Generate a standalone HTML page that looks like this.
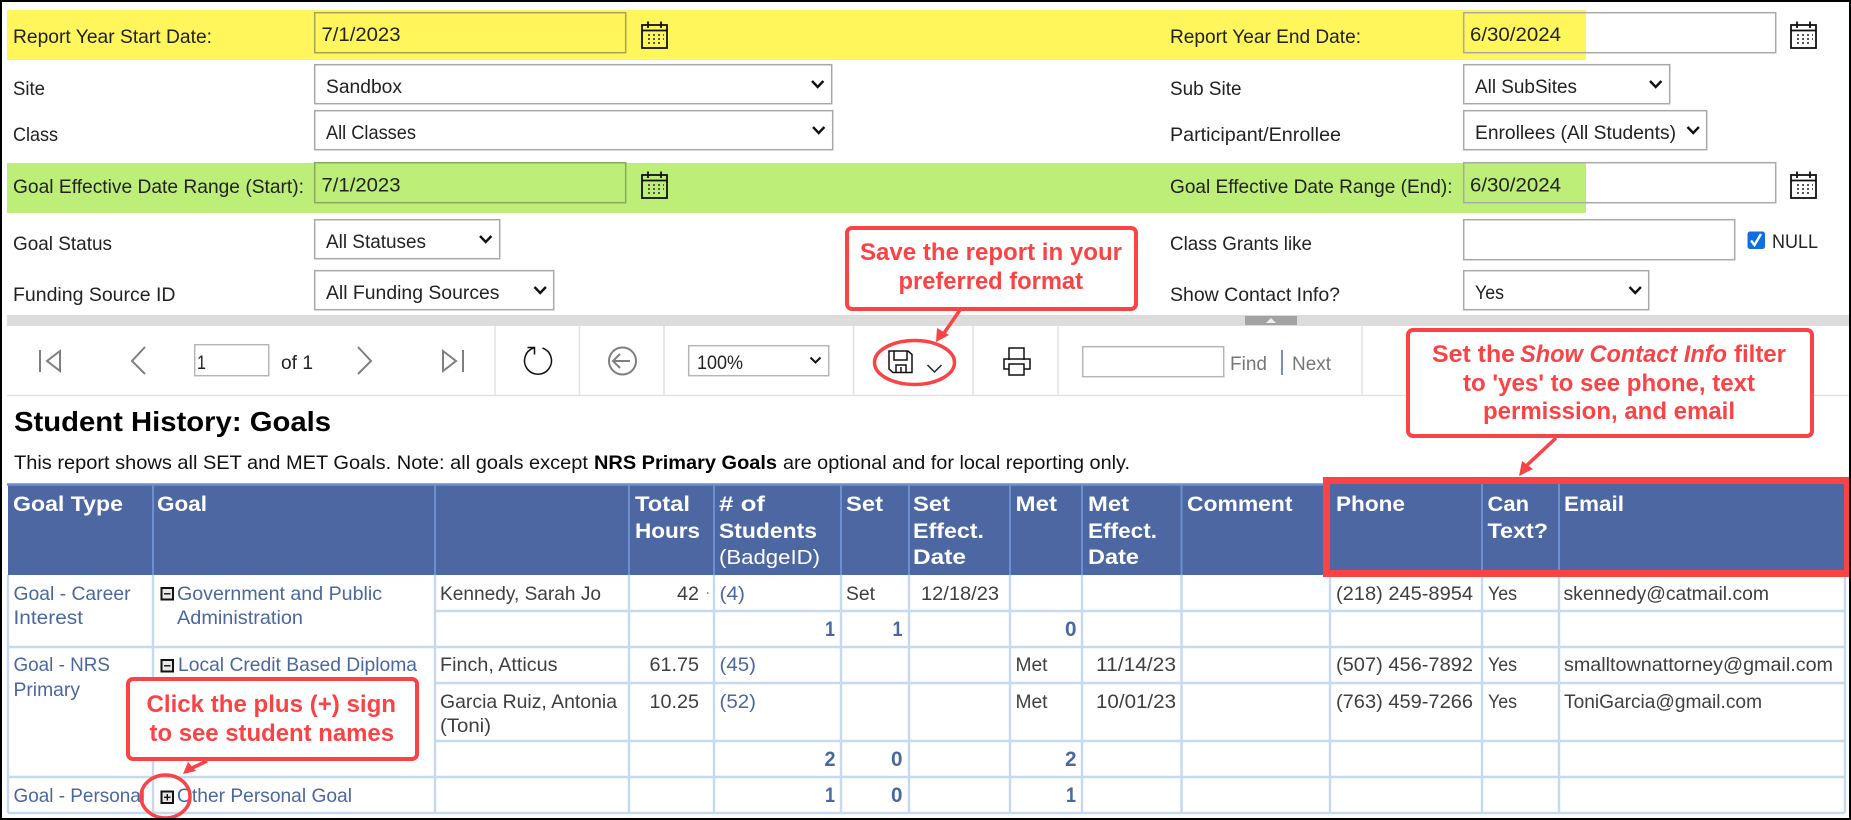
<!DOCTYPE html>
<html lang="en">
<head>
<meta charset="utf-8">
<title>Student History: Goals</title>
<style>
html,body{margin:0;padding:0;background:#fff;width:1851px;height:820px;overflow:hidden}
svg{display:block}
text{font-family:"Liberation Sans",Arial,sans-serif;white-space:pre}
.l{font-size:19.5px;fill:#222}
.i{font-size:19.5px;fill:#222}
.t{font-size:19.5px;fill:#3f3f3f}
.a{font-size:19.5px;fill:#4a679f}
.h{font-size:21.5px;font-weight:bold;fill:#fff}
.hn{font-size:20.5px;fill:#fff}
.n{font-size:21px;font-weight:bold;fill:#4a679f}
.c{font-size:24px;font-weight:bold;fill:#fb4245}
.g{font-size:19.5px;fill:#777}
.box{fill:#fff;stroke:#fb4245;stroke-width:4}
.sel{fill:#fff;stroke:#a8a8a8;stroke-width:1.5}
.chev{fill:none;stroke:#111;stroke-width:2.4}
.ln{stroke:#c6d9f2;stroke-width:2.4}
.sep{stroke:#e2e2e2;stroke-width:1.5}
.gi{fill:none;stroke:#7f7f7f;stroke-width:2}
.ki{fill:none;stroke:#111;stroke-width:1.5}
</style>
</head>
<body>
<svg xmlns="http://www.w3.org/2000/svg" width="1851" height="820" viewBox="0 0 1851 820">
<defs>
<g id="cal">
<rect x="1" y="4" width="25" height="23" fill="none" stroke="#111" stroke-width="1.800"/>
<path d="M1 9.500H26M7 0.500V7M20 0.500V7" stroke="#111" stroke-width="1.800" fill="none"/>
<path d="M7 13h2v2h-2zM12 13h2v2h-2zM17 13h2v2h-2zM22 13h1v2h-1zM7 17h2v2h-2zM12 17h2v2h-2zM17 17h2v2h-2zM22 17h1v2h-1zM7 21h2v2h-2zM12 21h2v2h-2zM17 21h2v2h-2z" fill="#555"/>
</g>
<g id="minus"><rect x="1" y="1" width="11.500" height="11.500" fill="#e8e8e8" stroke="#111" stroke-width="2"/><path d="M3.500 6.800H10" stroke="#111" stroke-width="1.400"/></g>
<g id="plus"><rect x="1" y="1" width="11.500" height="11.500" fill="#e8e8e8" stroke="#111" stroke-width="2"/><path d="M3.500 6.800H10M6.800 3.500V10" stroke="#111" stroke-width="1.400"/></g>
</defs>

<!-- Bands -->
<rect x="7" y="10" width="1579" height="50" fill="#fff65c"/>
<rect x="7" y="163" width="1579" height="50" fill="#bdee78"/>

<!-- Date inputs -->
<rect x="314.700" y="12.700" width="311" height="40" fill="none" stroke="#a5a25a" stroke-width="1.500"/>
<rect x="314.700" y="162.700" width="311" height="40" fill="none" stroke="#8aa860" stroke-width="1.500"/>
<rect x="1463.700" y="12.700" width="312" height="40" fill="none" stroke="#a9a9a9" stroke-width="1.500"/>
<rect x="1463.700" y="162.700" width="312" height="40" fill="none" stroke="#a9a9a9" stroke-width="1.500"/>
<use href="#cal" x="641" y="21"/>
<use href="#cal" x="641" y="171"/>
<use href="#cal" x="1790" y="21"/>
<use href="#cal" x="1790" y="171"/>

<!-- Selects -->
<rect class="sel" x="314.700" y="64.700" width="517" height="39"/>
<rect class="sel" x="314.700" y="110.700" width="518" height="39"/>
<rect class="sel" x="314.700" y="219.700" width="185" height="39"/>
<rect class="sel" x="314.700" y="270.700" width="239" height="39"/>
<rect class="sel" x="1463.700" y="64.700" width="206" height="39"/>
<rect class="sel" x="1463.700" y="110.700" width="243" height="39"/>
<rect class="sel" x="1463.700" y="219.700" width="271" height="40"/>
<rect class="sel" x="1463.700" y="270.700" width="185" height="39"/>
<path class="chev" d="M812 81l5.700 6 5.700-6M813 127l5.700 6 5.700-6M480 236l5.700 6 5.700-6M534.500 287l5.700 6 5.700-6M1650 81l5.700 6 5.700-6M1687.500 127l5.700 6 5.700-6M1629.500 287l5.700 6 5.700-6"/>

<!-- Filter labels -->
<text class="l" x="13" y="43" textLength="199" lengthAdjust="spacingAndGlyphs">Report Year Start Date:</text>
<text class="i" x="321.500" y="41" textLength="79" lengthAdjust="spacingAndGlyphs">7/1/2023</text>
<text class="l" x="13" y="95" textLength="32" lengthAdjust="spacingAndGlyphs">Site</text>
<text class="i" x="326" y="93" textLength="76" lengthAdjust="spacingAndGlyphs">Sandbox</text>
<text class="l" x="13" y="141" textLength="45" lengthAdjust="spacingAndGlyphs">Class</text>
<text class="i" x="326" y="139" textLength="90" lengthAdjust="spacingAndGlyphs">All Classes</text>
<text class="l" x="13" y="193" textLength="291" lengthAdjust="spacingAndGlyphs">Goal Effective Date Range (Start):</text>
<text class="i" x="321.500" y="191.500" textLength="79" lengthAdjust="spacingAndGlyphs">7/1/2023</text>
<text class="l" x="13" y="250" textLength="99" lengthAdjust="spacingAndGlyphs">Goal Status</text>
<text class="i" x="326" y="248" textLength="100" lengthAdjust="spacingAndGlyphs">All Statuses</text>
<text class="l" x="13" y="301" textLength="162.500" lengthAdjust="spacingAndGlyphs">Funding Source ID</text>
<text class="i" x="326" y="299" textLength="173.500" lengthAdjust="spacingAndGlyphs">All Funding Sources</text>

<text class="l" x="1170" y="43" textLength="191" lengthAdjust="spacingAndGlyphs">Report Year End Date:</text>
<text class="i" x="1470" y="41" textLength="91" lengthAdjust="spacingAndGlyphs">6/30/2024</text>
<text class="l" x="1170" y="95" textLength="71.500" lengthAdjust="spacingAndGlyphs">Sub Site</text>
<text class="i" x="1475" y="93" textLength="102" lengthAdjust="spacingAndGlyphs">All SubSites</text>
<text class="l" x="1170" y="141" textLength="171" lengthAdjust="spacingAndGlyphs">Participant/Enrollee</text>
<text class="i" x="1475" y="139" textLength="201" lengthAdjust="spacingAndGlyphs">Enrollees (All Students)</text>
<text class="l" x="1170" y="193" textLength="282.500" lengthAdjust="spacingAndGlyphs">Goal Effective Date Range (End):</text>
<text class="i" x="1470" y="191.500" textLength="91" lengthAdjust="spacingAndGlyphs">6/30/2024</text>
<text class="l" x="1170" y="250" textLength="142" lengthAdjust="spacingAndGlyphs">Class Grants like</text>
<rect x="1747.500" y="231.500" width="17.500" height="17.500" rx="2.500" fill="#0f6fe0"/>
<path d="M1751 240.500l3.500 4.500 6.500-11" fill="none" stroke="#fff" stroke-width="2.400"/>
<text class="i" x="1772" y="248" textLength="46" lengthAdjust="spacingAndGlyphs">NULL</text>
<text class="l" x="1170" y="301" textLength="170" lengthAdjust="spacingAndGlyphs">Show Contact Info?</text>
<text class="i" x="1475" y="299" textLength="29" lengthAdjust="spacingAndGlyphs">Yes</text>

<!-- Splitter bar -->
<rect x="7" y="315" width="1844" height="11" fill="#dcdcdc"/>
<rect x="1245" y="316" width="52" height="9" fill="#a2a2a2"/>
<path d="M1266 323l5-5 5 5z" fill="#eee"/>

<!-- Toolbar -->
<path class="sep" d="M495 326V395M579.500 326V395M664 326V395M853.500 326V395M973 326V395M1058 326V395M1362 326V395"/>
<path d="M7 395.500H1851" stroke="#e2e2e2" stroke-width="1.500"/>
<path class="gi" d="M40 350V372M60 351v20L47 361zM145 347l-13 14 13 13M358 347l13 14-13 13M443 351v20l13-10zM463 350v22"/>
<rect x="194.700" y="344.700" width="74" height="31" fill="#fff" stroke="#b5b5b5" stroke-width="1.500"/>
<text class="i" x="197" y="369" textLength="9" lengthAdjust="spacingAndGlyphs">1</text>
<text class="i" x="281" y="369" textLength="32" lengthAdjust="spacingAndGlyphs">of 1</text>
<path class="ki" d="M533.500 348a13.500 13.500 0 1 0 9 0M527.500 347.500H534.500V354.500" stroke-width="1.800"/>
<circle class="gi" cx="622.500" cy="361" r="13.500"/>
<path class="gi" d="M630 361H614M620 354l-7 7 7 7"/>
<rect x="688.700" y="345.700" width="140" height="30" fill="#fff" stroke="#b5b5b5" stroke-width="1.500"/>
<text class="i" x="697" y="369" textLength="46" lengthAdjust="spacingAndGlyphs">100%</text>
<path d="M810.500 357.500l5 5 5-5" fill="none" stroke="#111" stroke-width="2"/>
<path class="ki" d="M889 351H908L912 354.500V372.500H893L889 369ZM894 351V360H907V351M896 372.500V365H906V372.500M901 372.500V367"/>
<path d="M927.500 365l7 7 7-7" fill="none" stroke="#223" stroke-width="1.500"/>
<ellipse cx="914.500" cy="362.500" rx="40" ry="22" fill="none" stroke="#fb4245" stroke-width="3.500"/>
<path class="ki" d="M1009 360V348H1024V360M1009 369H1004V359H1030V369H1024M1009 364H1024V375H1009Z"/>
<rect x="1082.700" y="346.700" width="141" height="30" fill="#fff" stroke="#b5b5b5" stroke-width="1.500"/>
<text class="g" x="1230" y="370" textLength="37" lengthAdjust="spacingAndGlyphs">Find</text>
<path d="M1282 350V375" stroke="#4a679f" stroke-width="1.500"/>
<text class="g" x="1292" y="370" textLength="39" lengthAdjust="spacingAndGlyphs">Next</text>

<!-- Title -->
<text x="14" y="431" font-size="28" font-weight="bold" fill="#000" textLength="317" lengthAdjust="spacingAndGlyphs">Student History: Goals</text>
<text x="14" y="469" font-size="19.500" fill="#111" textLength="574" lengthAdjust="spacingAndGlyphs">This report shows all SET and MET Goals. Note: all goals except</text>
<text x="594" y="469" font-size="19.500" font-weight="bold" fill="#000" textLength="183" lengthAdjust="spacingAndGlyphs">NRS Primary Goals</text>
<text x="783" y="469" font-size="19.500" fill="#111" textLength="347" lengthAdjust="spacingAndGlyphs">are optional and for local reporting only.</text>

<!-- Table header -->
<rect x="8" y="484" width="1837" height="91" fill="#4c67a2"/>
<path d="M7 484.500H1330" stroke="#6b8fd0" stroke-width="2.500"/>
<path d="M153 484V575M435 484V575M629 484V575M714 484V575M841 484V575M909 484V575M1010 484V575M1082 484V575M1181.500 484V575M1482 484V575M1559 484V575" stroke="#6b8fd0" stroke-width="2"/>

<text class="h" x="13" y="511" textLength="110" lengthAdjust="spacingAndGlyphs">Goal Type</text>
<text class="h" x="157" y="511" textLength="50" lengthAdjust="spacingAndGlyphs">Goal</text>
<text class="h" x="635" y="511" textLength="55" lengthAdjust="spacingAndGlyphs">Total</text>
<text class="h" x="635" y="538" textLength="65" lengthAdjust="spacingAndGlyphs">Hours</text>
<text class="h" x="719" y="511" textLength="46" lengthAdjust="spacingAndGlyphs"># of</text>
<text class="h" x="719" y="538" textLength="98" lengthAdjust="spacingAndGlyphs">Students</text>
<text class="hn" x="719" y="564" textLength="101" lengthAdjust="spacingAndGlyphs">(BadgeID)</text>
<text class="h" x="846" y="511" textLength="37" lengthAdjust="spacingAndGlyphs">Set</text>
<text class="h" x="913" y="511" textLength="37" lengthAdjust="spacingAndGlyphs">Set</text>
<text class="h" x="913" y="538" textLength="71" lengthAdjust="spacingAndGlyphs">Effect.</text>
<text class="h" x="913" y="564" textLength="53" lengthAdjust="spacingAndGlyphs">Date</text>
<text class="h" x="1015.500" y="511" textLength="41.500" lengthAdjust="spacingAndGlyphs">Met</text>
<text class="h" x="1088" y="511" textLength="41" lengthAdjust="spacingAndGlyphs">Met</text>
<text class="h" x="1088" y="538" textLength="69" lengthAdjust="spacingAndGlyphs">Effect.</text>
<text class="h" x="1088" y="564" textLength="51" lengthAdjust="spacingAndGlyphs">Date</text>
<text class="h" x="1187" y="511" textLength="105.500" lengthAdjust="spacingAndGlyphs">Comment</text>
<text class="h" x="1336" y="511" textLength="69" lengthAdjust="spacingAndGlyphs">Phone</text>
<text class="h" x="1487.500" y="511" textLength="41.500" lengthAdjust="spacingAndGlyphs">Can</text>
<text class="h" x="1487.500" y="538" textLength="60.500" lengthAdjust="spacingAndGlyphs">Text?</text>
<text class="h" x="1564" y="511" textLength="60" lengthAdjust="spacingAndGlyphs">Email</text>

<!-- Table grid -->
<path class="ln" d="M8 575V813M153 575V813M435 575V813M629 575V813M714 575V813M841 575V813M909 575V813M1010 575V813M1082 575V813M1181.500 575V813M1330 575V813M1482 575V813M1559 575V813M1845 575V813"/>
<path class="ln" d="M435 611H1845M8 647H1845M435 683H1845M435 741H1845M8 777H1845M8 813H1845"/>

<!-- Row 1 -->
<text class="a" x="13.500" y="600" textLength="117" lengthAdjust="spacingAndGlyphs">Goal - Career</text>
<text class="a" x="13.500" y="624" textLength="69.500" lengthAdjust="spacingAndGlyphs">Interest</text>
<use href="#minus" x="160.500" y="587"/>
<text class="a" x="177" y="600" textLength="205" lengthAdjust="spacingAndGlyphs">Government and Public</text>
<text class="a" x="177" y="624" textLength="126" lengthAdjust="spacingAndGlyphs">Administration</text>
<text class="t" x="440" y="600" textLength="161" lengthAdjust="spacingAndGlyphs">Kennedy, Sarah Jo</text>
<text class="t" x="677" y="600" textLength="22" lengthAdjust="spacingAndGlyphs">42</text>
<rect x="707" y="592" width="1.500" height="2" fill="#999"/>
<text class="a" x="719.500" y="600" textLength="25.500" lengthAdjust="spacingAndGlyphs">(4)</text>
<text class="t" x="846" y="600" textLength="29" lengthAdjust="spacingAndGlyphs">Set</text>
<text class="t" x="921" y="600" textLength="78" lengthAdjust="spacingAndGlyphs">12/18/23</text>
<text class="t" x="1336" y="600" textLength="137" lengthAdjust="spacingAndGlyphs">(218) 245-8954</text>
<text class="t" x="1488" y="600" textLength="29" lengthAdjust="spacingAndGlyphs">Yes</text>
<text class="t" x="1563.500" y="600" textLength="205.500" lengthAdjust="spacingAndGlyphs">skennedy@catmail.com</text>
<text class="n" x="825" y="636" textLength="10" lengthAdjust="spacingAndGlyphs">1</text>
<text class="n" x="892.500" y="636" textLength="10" lengthAdjust="spacingAndGlyphs">1</text>
<text class="n" x="1065" y="636" textLength="11.500" lengthAdjust="spacingAndGlyphs">0</text>

<!-- Row 2 -->
<text class="a" x="13.500" y="671" textLength="96.500" lengthAdjust="spacingAndGlyphs">Goal - NRS</text>
<text class="a" x="13.500" y="696" textLength="66.500" lengthAdjust="spacingAndGlyphs">Primary</text>
<use href="#minus" x="160.500" y="659"/>
<text class="a" x="178" y="671" textLength="239" lengthAdjust="spacingAndGlyphs">Local Credit Based Diploma</text>
<text class="t" x="440" y="671" textLength="117.500" lengthAdjust="spacingAndGlyphs">Finch, Atticus</text>
<text class="t" x="649.500" y="671" textLength="49.500" lengthAdjust="spacingAndGlyphs">61.75</text>
<text class="a" x="719.500" y="671" textLength="36.500" lengthAdjust="spacingAndGlyphs">(45)</text>
<text class="t" x="1015.500" y="671" textLength="32" lengthAdjust="spacingAndGlyphs">Met</text>
<text class="t" x="1096" y="671" textLength="80" lengthAdjust="spacingAndGlyphs">11/14/23</text>
<text class="t" x="1336" y="671" textLength="137" lengthAdjust="spacingAndGlyphs">(507) 456-7892</text>
<text class="t" x="1488" y="671" textLength="29" lengthAdjust="spacingAndGlyphs">Yes</text>
<text class="t" x="1564" y="671" textLength="269" lengthAdjust="spacingAndGlyphs">smalltownattorney@gmail.com</text>

<!-- Row 3 -->
<text class="t" x="440" y="708" textLength="177" lengthAdjust="spacingAndGlyphs">Garcia Ruiz, Antonia</text>
<text class="t" x="440" y="732" textLength="51" lengthAdjust="spacingAndGlyphs">(Toni)</text>
<text class="t" x="649.500" y="708" textLength="49.500" lengthAdjust="spacingAndGlyphs">10.25</text>
<text class="a" x="719.500" y="708" textLength="36.500" lengthAdjust="spacingAndGlyphs">(52)</text>
<text class="t" x="1015.500" y="708" textLength="32" lengthAdjust="spacingAndGlyphs">Met</text>
<text class="t" x="1096" y="708" textLength="80" lengthAdjust="spacingAndGlyphs">10/01/23</text>
<text class="t" x="1336" y="708" textLength="137" lengthAdjust="spacingAndGlyphs">(763) 459-7266</text>
<text class="t" x="1488" y="708" textLength="29" lengthAdjust="spacingAndGlyphs">Yes</text>
<text class="t" x="1564" y="708" textLength="198" lengthAdjust="spacingAndGlyphs">ToniGarcia@gmail.com</text>

<text class="n" x="824.500" y="766" textLength="11" lengthAdjust="spacingAndGlyphs">2</text>
<text class="n" x="891" y="766" textLength="11.500" lengthAdjust="spacingAndGlyphs">0</text>
<text class="n" x="1065" y="766" textLength="11.500" lengthAdjust="spacingAndGlyphs">2</text>

<!-- Row 4 -->
<text class="a" x="13.500" y="802" textLength="131.500" lengthAdjust="spacingAndGlyphs">Goal - Personal</text>
<use href="#plus" x="160.500" y="790.500"/>
<text class="a" x="177" y="802" textLength="175" lengthAdjust="spacingAndGlyphs">Other Personal Goal</text>
<text class="n" x="825" y="802" textLength="10" lengthAdjust="spacingAndGlyphs">1</text>
<text class="n" x="891" y="802" textLength="11.500" lengthAdjust="spacingAndGlyphs">0</text>
<text class="n" x="1066" y="802" textLength="10" lengthAdjust="spacingAndGlyphs">1</text>

<!-- Red contact rectangle -->
<rect x="1326.500" y="480.500" width="521" height="93" fill="none" stroke="#fb4245" stroke-width="7"/>

<!-- Callouts -->
<path d="M960 310L942 336" stroke="#fb4245" stroke-width="3.500" fill="none"/>
<path d="M936 342L937 328 949 335Z" fill="#fb4245"/>
<rect class="box" x="847" y="228" width="289" height="81" rx="5"/>
<text class="c" x="860" y="260" textLength="262" lengthAdjust="spacingAndGlyphs">Save the report in your</text>
<text class="c" x="898.500" y="289" textLength="184.500" lengthAdjust="spacingAndGlyphs">preferred format</text>

<path d="M1556 438L1525 467" stroke="#fb4245" stroke-width="3.500" fill="none"/>
<path d="M1519 476L1522 461 1533 469Z" fill="#fb4245"/>
<rect class="box" x="1408" y="330" width="404" height="106" rx="5"/>
<text class="c" x="1432" y="362" textLength="83" lengthAdjust="spacingAndGlyphs">Set the</text>
<text class="c" x="1520" y="362" font-style="italic" textLength="207" lengthAdjust="spacingAndGlyphs">Show Contact Info</text>
<text class="c" x="1734" y="362" textLength="52" lengthAdjust="spacingAndGlyphs">filter</text>
<text class="c" x="1463" y="391" textLength="292" lengthAdjust="spacingAndGlyphs">to 'yes' to see phone, text</text>
<text class="c" x="1483" y="419" textLength="252" lengthAdjust="spacingAndGlyphs">permission, and email</text>

<path d="M207 761L192 768" stroke="#fb4245" stroke-width="3.500" fill="none"/>
<path d="M183 774L188 762 196 771Z" fill="#fb4245"/>
<rect class="box" x="128" y="679" width="289" height="80" rx="5"/>
<text class="c" x="146.500" y="712" textLength="249.500" lengthAdjust="spacingAndGlyphs">Click the plus (+) sign</text>
<text class="c" x="149.500" y="741" textLength="244.500" lengthAdjust="spacingAndGlyphs">to see student names</text>
<ellipse cx="165.500" cy="796.500" rx="24.500" ry="21.500" fill="none" stroke="#fb4245" stroke-width="3.500"/>

<!-- Screenshot frame -->
<rect x="0" y="0" width="1851" height="2" fill="#000"/>
<rect x="0" y="818" width="1851" height="2" fill="#000"/>
<rect x="0" y="0" width="2" height="820" fill="#000"/>
<rect x="1849" y="0" width="2" height="820" fill="#000"/>
</svg>
</body>
</html>
